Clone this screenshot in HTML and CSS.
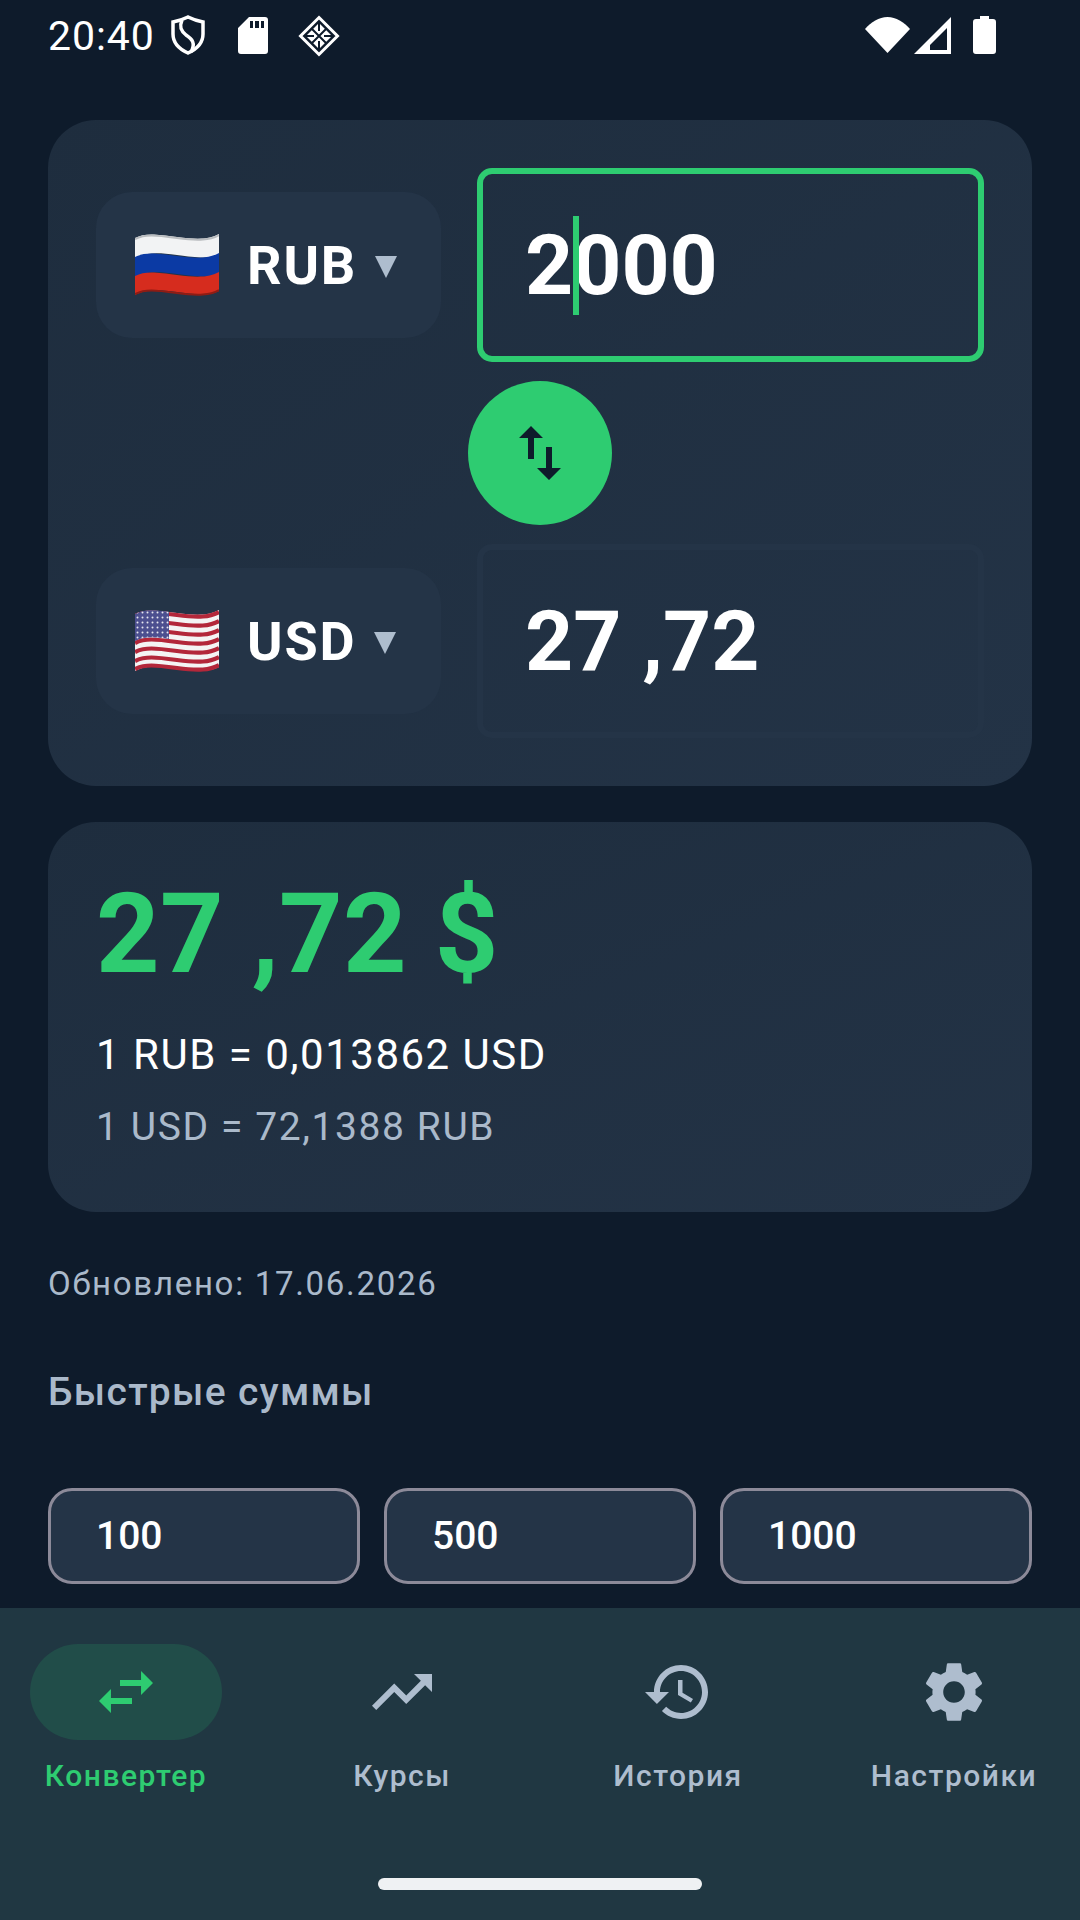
FILE: index.html
```html
<!DOCTYPE html>
<html>
    <head>
        <meta charset="utf-8">
        <title>Конвертер</title>
        <link rel="stylesheet" href="styles.css">
    </head>
    <body>
        <div class="status">
            <span class="time">20:40</span>
            <svg class="ic-shield" viewBox="0 0 34 40"><path d="M17 2C21 4 27 6 32 7V19C32 28 26 34 17 38C8 34 2 28 2 19V7C7 6 13 4 17 2Z" fill="none" stroke="#fff" stroke-width="3.500"/><path d="M11 5C8 12 10 16 15 20C21 24 25 28 20 37" fill="none" stroke="#fff" stroke-width="3.500"/></svg>
            <svg class="ic-sd" viewBox="0 0 30 37"><path fill="#fff" fill-rule="evenodd" d="M11 0H27a3 3 0 0 1 3 3V34a3 3 0 0 1-3 3H3a3 3 0 0 1-3-3V11ZM12 4V11H15V4ZM17 4V11H21V4ZM23 4V11H26V4Z"/></svg>
            <svg class="ic-diamond" viewBox="0 0 42 42"><path d="M21 2.500 L39.500 21 L21 39.500 L2.500 21 Z" fill="none" stroke="#fff" stroke-width="3"/><path d="M21 8 L34 21 L21 34 L8 21 Z" fill="#fff"/><path d="M14 14 L28 28 M28 14 L14 28 M21 8 V16 M21 26 V34 M8 21 H16 M26 21 H34" fill="none" stroke="#0e1b2b" stroke-width="2"/></svg>
            <span class="status-gap"></span>
            <svg class="ic-wifi" viewBox="0 0 45 36"><path fill="#fff" d="M22.500 36 L0 12 C6 5 14 0 22.500 0 C31 0 39 5 45 12 Z"/></svg>
            <svg class="ic-signal" viewBox="0 0 37 37"><path fill="#fff" fill-rule="evenodd" d="M37 0V37H0ZM33 11 L16 28V33H33Z"/></svg>
            <svg class="ic-battery" viewBox="0 0 23 38"><path fill="#fff" d="M7 0H16V3H20a3 3 0 0 1 3 3V35a3 3 0 0 1-3 3H3a3 3 0 0 1-3-3V6a3 3 0 0 1 3-3H7Z"/></svg>
        </div>

        <div class="main">
            <div class="card convert">
                <div class="row">
                    <div class="picker">
                        <svg class="flag" viewBox="0 0 84 62">
                            <path fill="#f2f3f4" d="M0 4c10-5 20-4 42-1s33 2 42-3V20c-9 5-20 4-42 1s-32-2-42 3Z"/>
                            <path fill="#0b3aa4" d="M0 23c10-5 20-4 42-1s33 2 42-3V39c-9 5-20 4-42 1s-32-2-42 3Z"/>
                            <path fill="#d62c1e" d="M0 42c10-5 20-4 42-1s33 2 42-3V57c-9 5-20 4-42 1s-32-2-42 3Z"/>
                            <path fill="none" stroke="#b9bcbf" stroke-width="2" d="M0 5c10-5 20-4 42-1s33 2 42-3"/>
                            <path fill="none" stroke="#8f1c14" stroke-width="2" d="M0 60c10-5 20-4 42-1s33 2 42-3"/>
                        </svg>
                        <span class="code">RUB</span>
                        <span class="tri"></span>
                    </div>
                    <div class="field active">
                        <span class="digit">2</span><span class="caret"></span><span class="digit">000</span>
                    </div>
                </div>
                <div class="swap">
                    <svg viewBox="0 0 24 24"><path d="M16 17.01V10h-2v7.010h-3L15 21l4-3.990h-3zM9 3L5 6.990h3V14h2V6.990h3L9 3z"/></svg>
                </div>
                <div class="row">
                    <div class="picker">
                        <svg class="flag" viewBox="0 0 84 62">
                            <defs>
                                <pattern id="stars" width="5" height="5" patternUnits="userSpaceOnUse">
                                    <circle cx="2.500" cy="2.500" r="1" fill="#e6e6ef"/>
                                </pattern>
                            </defs>
                            <path fill="#f4f4f4" d="M0 4c10-5 20-4 42-1s33 2 42-3V57c-9 5-20 4-42 1s-32-2-42 3Z"/>
                            <path fill="none" stroke="#b3273a" stroke-width="4.200" d="M0 6c10-5 20-4 42-1s33 2 42-3M0 15c10-5 20-4 42-1s33 2 42-3M0 24c10-5 20-4 42-1s33 2 42-3M0 33c10-5 20-4 42-1s33 2 42-3M0 42c10-5 20-4 42-1s33 2 42-3M0 51c10-5 20-4 42-1s33 2 42-3M0 59c10-5 20-4 42-1s33 2 42-3"/>
                            <path fill="#4c4f8f" d="M0 4c10-5 20-4 34-2V29c-14-2-24-3-34 2Z"/>
                            <path fill="url(#stars)" d="M0 4c10-5 20-4 34-2V29c-14-2-24-3-34 2Z"/>
                        </svg>
                        <span class="code">USD</span>
                        <span class="tri"></span>
                    </div>
                    <div class="field">27 ,72</div>
                </div>
            </div>

            <div class="card result">
                <div class="big">27 ,72 $</div>
                <div class="rate">1 RUB = 0,013862 USD</div>
                <div class="rate dim">1 USD = 72,1388 RUB</div>
            </div>

            <div class="updated">Обновлено: 17.06.2026</div>
            <div class="title">Быстрые суммы</div>

            <div class="chips">
                <div class="chip">100</div>
                <div class="chip">500</div>
                <div class="chip">1000</div>
            </div>
        </div>

        <div class="nav">
            <div class="tabs">
                <div class="tab on">
                    <div class="pill"><svg viewBox="0 0 24 24"><path d="M6.990 11L3 15l3.990 4v-3H14v-2H6.990v-3zM21 9l-3.990-4v3H10v2h7.010v3L21 9z"/></svg></div>
                    <span>Конвертер</span>
                </div>
                <div class="tab">
                    <div class="pill"><svg viewBox="0 0 24 24"><path d="M16 6l2.290 2.290-4.880 4.880-4-4L2 16.590 3.410 18l6-6 4 4 6.300-6.290L22 12V6z"/></svg></div>
                    <span>Курсы</span>
                </div>
                <div class="tab">
                    <div class="pill"><svg viewBox="0 0 24 24"><path d="M13 3c-4.970 0-9 4.030-9 9H1l3.890 3.890.07.14L9 12H6c0-3.870 3.130-7 7-7s7 3.130 7 7-3.130 7-7 7c-1.930 0-3.680-.79-4.940-2.060l-1.420 1.420C8.270 19.990 10.510 21 13 21c4.970 0 9-4.030 9-9s-4.030-9-9-9zm-1 5v5l4.280 2.540.72-1.210-3.500-2.080V8H12z"/></svg></div>
                    <span>История</span>
                </div>
                <div class="tab">
                    <div class="pill"><svg viewBox="0 0 24 24"><path d="M19.140 12.940c.04-.3.06-.61.06-.94 0-.32-.02-.64-.07-.94l2.030-1.580c.18-.14.23-.41.12-.61l-1.920-3.320c-.12-.22-.37-.29-.59-.22l-2.390.96c-.5-.38-1.030-.7-1.620-.94l-.36-2.540c-.04-.24-.24-.41-.48-.41h-3.840c-.24 0-.43.17-.47.41l-.36 2.540c-.59.24-1.130.57-1.620.94l-2.390-.96c-.22-.08-.47 0-.59.22L2.740 8.870c-.12.21-.08.47.12.61l2.030 1.580c-.05.3-.09.63-.09.94s.02.64.07.94l-2.030 1.580c-.18.14-.23.41-.12.61l1.920 3.320c.12.22.37.29.59.22l2.390-.96c.5.38 1.030.7 1.620.94l.36 2.540c.05.24.24.41.48.41h3.840c.24 0 .44-.17.47-.41l.36-2.540c.59-.24 1.130-.56 1.620-.94l2.390.96c.22.08.47 0 .59-.22l1.920-3.320c.12-.22.07-.47-.12-.61l-2.010-1.580zM12 15.600c-1.980 0-3.600-1.620-3.600-3.600s1.620-3.600 3.600-3.600 3.600 1.620 3.600 3.600-1.620 3.600-3.600 3.600z"/></svg></div>
                    <span>Настройки</span>
                </div>
            </div>
            <div class="home"></div>
        </div>
    </body>
</html>
```

FILE: styles.css
```css
*{
    box-sizing: border-box;
}
html,body{
    margin: 0;
    height: 1920px;
    overflow: hidden;
}
body{
    display: flex;
    flex-direction: column;
    background-color: #0e1b2b;
    color: white;
    font-family: Roboto, "Noto Sans", sans-serif;
}

/* status bar */
.status{
    height: 120px;
    flex: none;
    padding: 15px 84px 0 48px;
    display: flex;
    align-items: flex-start;
}
.time{
    font-size: 41px;
    line-height: 42px;
    width: 123px;
    letter-spacing: 0.9px;
}
.ic-shield{
    width: 34px;
    height: 40px;
}
.ic-sd{
    width: 30px;
    height: 37px;
    margin: 2px 0 0 33px;
}
.ic-diamond{
    width: 42px;
    height: 42px;
    margin-left: 30px;
}
.status-gap{
    flex: 1;
}
.ic-wifi{
    width: 45px;
    height: 36px;
    margin-top: 2px;
}
.ic-signal{
    width: 37px;
    height: 37px;
    margin: 2px 0 0 4px;
}
.ic-battery{
    width: 23px;
    height: 38px;
    margin: 1px 0 0 22px;
}

/* cards */
.main{
    flex: 1;
    padding: 0 48px;
}
.card{
    background: linear-gradient(to bottom right,#1e2d3e,#233346);
    border-radius: 48px;
    padding: 48px;
}
.row{
    display: grid;
    grid-template-columns: 345px 507px;
    column-gap: 36px;
    align-items: center;
}
.picker{
    height: 146px;
    background-color: #243447;
    border-radius: 36px;
    padding-left: 39px;
    display: flex;
    align-items: center;
}
.flag{
    width: 84px;
    height: 62px;
}
.code{
    font-size: 54px;
    font-weight: 700;
    margin-left: 28px;
    letter-spacing: 1.8px;
}
.tri{
    width: 0;
    height: 0;
    margin: 4px 0 0 18px;
    border-left: 11px solid transparent;
    border-right: 11px solid transparent;
    border-top: 22px solid #aebdce;
}
.field{
    height: 194px;
    border: 6px solid #243447;
    border-radius: 15px;
    padding-left: 42px;
    display: flex;
    align-items: center;
    font-size: 84px;
    font-weight: 700;
}
.field.active{
    border-color: #2ecc71;
}
.caret{
    flex: none;
    width: 6px;
    height: 99px;
    margin-right: -6px;
    background-color: #2ecc71;
    position: relative;
}
.swap{
    width: 144px;
    height: 144px;
    margin: 19px auto;
    border-radius: 50%;
    background-color: #2ecc71;
    display: flex;
    align-items: center;
    justify-content: center;
}
.swap svg{
    width: 72px;
    height: 72px;
    fill: #0e1b2b;
}

.result{
    margin-top: 36px;
    height: 390px;
}
.big{
    font-size: 111px;
    font-weight: 700;
    line-height: 128px;
    letter-spacing: 0.2px;
    color: #2ecc71;
}
.rate{
    font-size: 42px;
    line-height: 48px;
    letter-spacing: 1.5px;
    margin-top: 33px;
}
.dim{
    color: #aab9ca;
    margin-top: 24px;
    font-size: 39px;
    letter-spacing: 1.6px;
}
.updated{
    margin-top: 53px;
    font-size: 33px;
    line-height: 38px;
    letter-spacing: 1.7px;
    color: #aab9ca;
}
.title{
    margin-top: 67px;
    font-size: 39px;
    line-height: 44px;
    font-weight: 500;
    letter-spacing: 1.3px;
    color: #aab9ca;
}
.chips{
    margin-top: 74px;
    display: grid;
    grid-template-columns: repeat(3,1fr);
    column-gap: 24px;
}
.chip{
    height: 96px;
    border: 3px solid #8c8a99;
    border-radius: 24px;
    background-color: #243447;
    padding-left: 45px;
    display: flex;
    align-items: center;
    font-size: 39px;
    font-weight: 500;
}

/* bottom nav */
.nav{
    height: 312px;
    flex: none;
    background-color: #203742;
    padding: 36px 6px 0 6px;
    display: flex;
    flex-direction: column;
    align-items: center;
}
.tabs{
    display: grid;
    grid-template-columns: repeat(4,240px);
    column-gap: 36px;
}
.tab{
    display: flex;
    flex-direction: column;
    align-items: center;
    font-size: 30px;
    line-height: 36px;
    font-weight: 500;
    letter-spacing: 1.5px;
    color: #aebdce;
    white-space: nowrap;
}
.pill{
    width: 192px;
    height: 96px;
    border-radius: 48px;
    display: flex;
    align-items: center;
    justify-content: center;
    margin-bottom: 18px;
}
.pill svg{
    width: 72px;
    height: 72px;
    fill: #aebdce;
}
.on{
    color: #2ecc71;
}
.on .pill{
    background-color: #214d49;
}
.on .pill svg{
    fill: #2ecc71;
}
.home{
    width: 324px;
    height: 12px;
    border-radius: 6px;
    background-color: #eff1f3;
    margin-top: 84px;
}
```
